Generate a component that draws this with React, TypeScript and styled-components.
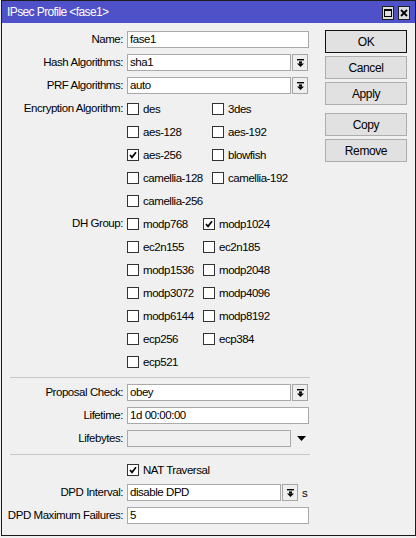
import React from "react";
import styled, { createGlobalStyle } from "styled-components";

const GlobalStyle = createGlobalStyle`
  html, body {
    margin: 0;
    padding: 0;
    background: #f0f0f0;
  }
  body {
    font-family: "Liberation Sans", Arial, sans-serif;
    font-size: 11.5px;
    color: #000;
  }
`;

const Window = styled.div`
  margin-left: 1px;
  width: 415px;
  height: 536px;
  box-sizing: border-box;
  border: 1px solid #1c1c1c;
  background: #f0f0f0;
  display: flex;
  flex-direction: column;
`;

const TitleBar = styled.div`
  height: 22px;
  flex: none;
  background: #4f51c9;
  display: flex;
  align-items: center;
  padding: 0 5px 0 5px;
`;

const Title = styled.div`
  color: #fff;
  font-size: 12px;
  letter-spacing: -0.6px;
`;

const TitleButtons = styled.div`
  margin-left: auto;
  margin-top: 2px;
  display: flex;
  gap: 4px;
`;

const TitleButton = styled.div`
  width: 12px;
  height: 14px;
  box-sizing: border-box;
  border: 1px solid #202020;
  background: #dedede;
  display: flex;
  align-items: center;
  justify-content: center;
`;

const Body = styled.div`
  display: flex;
  padding-top: 5px;
`;

const Form = styled.div`
  width: 307px;
  display: flex;
  flex-direction: column;
`;

const Row = styled.div`
  display: grid;
  grid-template-columns: 121px 182px;
  column-gap: 4px;
  align-items: start;
`;

const Label = styled.div`
  text-align: right;
  line-height: 23px;
  letter-spacing: -0.45px;
  white-space: nowrap;
`;

const Field = styled.div`
  min-height: 23px;
  display: flex;
  align-items: center;
`;

const Input = styled.div<{ $w?: number; $disabled?: boolean }>`
  width: ${(p) => p.$w ?? 182}px;
  height: 17px;
  box-sizing: border-box;
  border: 1px solid #a9a9a9;
  background: ${(p) => (p.$disabled ? "#f0f0f0" : "#fff")};
  padding: 0 2px;
  line-height: 15px;
  letter-spacing: -0.45px;
  white-space: nowrap;
  overflow: hidden;
`;

const DropButton = styled.div`
  width: 16px;
  height: 17px;
  margin-left: 1px;
  box-sizing: border-box;
  border: 1px solid #a6a6a6;
  background: #efefef;
  display: flex;
  align-items: center;
  justify-content: center;
`;

const Unit = styled.span`
  margin-left: 4px;
  letter-spacing: -0.45px;
`;

const ArrowOnly = styled.div`
  margin-left: 6px;
  display: flex;
  align-items: center;
`;

const CheckGrid = styled.div<{ $col: number }>`
  display: grid;
  grid-template-columns: ${(p) => p.$col}px 1fr;
  grid-auto-rows: 23px;
  align-items: center;
`;

const CheckItem = styled.label`
  display: flex;
  align-items: center;
  gap: 4px;
  letter-spacing: -0.45px;
  white-space: nowrap;
`;

const Box = styled.span`
  width: 12px;
  height: 12px;
  box-sizing: border-box;
  border: 1px solid #333;
  background: #fff;
  display: flex;
  align-items: center;
  justify-content: center;
`;

const Separator = styled.div`
  margin: 4px 0 3px 8px;
  width: 300px;
  border-top: 1px solid #c8c8c8;
`;

const Side = styled.div`
  margin-left: 16px;
  width: 82px;
  padding-top: 2px;
  display: flex;
  flex-direction: column;
  gap: 3px;
`;

const Button = styled.div<{ $primary?: boolean; $gapTop?: number }>`
  height: 23px;
  box-sizing: border-box;
  border: 1px solid ${(p) => (p.$primary ? "#111" : "#adadad")};
  background: #e1e1e1;
  margin-top: ${(p) => p.$gapTop ?? 0}px;
  display: flex;
  align-items: center;
  justify-content: center;
  font-size: 12px;
  letter-spacing: -0.4px;
`;

const DropGlyph = () => (
  <svg width="7" height="8" viewBox="0 0 7 8">
    <rect x="0" y="0" width="7" height="1.4" fill="#000" />
    <rect x="2" y="2.4" width="3" height="2.2" fill="#000" />
    <path d="M0 4.4h7L3.5 8z" fill="#000" />
  </svg>
);

const CheckGlyph = () => (
  <svg width="10" height="10" viewBox="0 0 10 10">
    <path d="M2 5l2 2.3L8 2.3" fill="none" stroke="#000" strokeWidth="1.7" />
  </svg>
);

const Check: React.FC<{ label: string; checked?: boolean }> = ({ label, checked }) => (
  <CheckItem>
    <Box>{checked && <CheckGlyph />}</Box>
    {label}
  </CheckItem>
);

const Combo: React.FC<{ value: string; w?: number }> = ({ value, w = 164 }) => (
  <>
    <Input $w={w}>{value}</Input>
    <DropButton>
      <DropGlyph />
    </DropButton>
  </>
);

const encryption: [string, boolean][] = [
  ["des", false],
  ["3des", false],
  ["aes-128", false],
  ["aes-192", false],
  ["aes-256", true],
  ["blowfish", false],
  ["camellia-128", false],
  ["camellia-192", false],
  ["camellia-256", false],
];

const dhGroups: [string, boolean][] = [
  ["modp768", false],
  ["modp1024", true],
  ["ec2n155", false],
  ["ec2n185", false],
  ["modp1536", false],
  ["modp2048", false],
  ["modp3072", false],
  ["modp4096", false],
  ["modp6144", false],
  ["modp8192", false],
  ["ecp256", false],
  ["ecp384", false],
  ["ecp521", false],
];

export default function App() {
  return (
    <>
      <GlobalStyle />
      <Window>
        <TitleBar>
          <Title>IPsec Profile &lt;fase1&gt;</Title>
          <TitleButtons>
            <TitleButton>
              <svg width="8" height="8" viewBox="0 0 8 8">
                <rect x="0.5" y="0.5" width="7" height="7" fill="none" stroke="#000" />
                <rect x="0" y="0" width="8" height="2" fill="#000" />
              </svg>
            </TitleButton>
            <TitleButton>
              <svg width="8" height="8" viewBox="0 0 8 8">
                <path d="M1 1l6 6M7 1L1 7" stroke="#000" strokeWidth="1.8" />
              </svg>
            </TitleButton>
          </TitleButtons>
        </TitleBar>
        <Body>
          <Form>
            <Row>
              <Label>Name:</Label>
              <Field>
                <Input>fase1</Input>
              </Field>
            </Row>
            <Row>
              <Label>Hash Algorithms:</Label>
              <Field>
                <Combo value="sha1" />
              </Field>
            </Row>
            <Row>
              <Label>PRF Algorithms:</Label>
              <Field>
                <Combo value="auto" />
              </Field>
            </Row>
            <Row>
              <Label>Encryption Algorithm:</Label>
              <CheckGrid $col={85}>
                {encryption.map(([name, on]) => (
                  <Check key={name} label={name} checked={on} />
                ))}
              </CheckGrid>
            </Row>
            <Row>
              <Label>DH Group:</Label>
              <CheckGrid $col={76}>
                {dhGroups.map(([name, on]) => (
                  <Check key={name} label={name} checked={on} />
                ))}
              </CheckGrid>
            </Row>
            <Separator />
            <Row>
              <Label>Proposal Check:</Label>
              <Field>
                <Combo value="obey" />
              </Field>
            </Row>
            <Row>
              <Label>Lifetime:</Label>
              <Field>
                <Input>1d 00:00:00</Input>
              </Field>
            </Row>
            <Row>
              <Label>Lifebytes:</Label>
              <Field>
                <Input $w={164} $disabled />
                <ArrowOnly>
                  <svg width="9" height="5" viewBox="0 0 9 5">
                    <path d="M0 0h9L4.5 5z" fill="#000" />
                  </svg>
                </ArrowOnly>
              </Field>
            </Row>
            <Separator />
            <Row>
              <Label />
              <Field>
                <Check label="NAT Traversal" checked />
              </Field>
            </Row>
            <Row>
              <Label>DPD Interval:</Label>
              <Field>
                <Combo value="disable DPD" w={154} />
                <Unit>s</Unit>
              </Field>
            </Row>
            <Row>
              <Label>DPD Maximum Failures:</Label>
              <Field>
                <Input>5</Input>
              </Field>
            </Row>
          </Form>
          <Side>
            <Button $primary>OK</Button>
            <Button>Cancel</Button>
            <Button>Apply</Button>
            <Button $gapTop={5}>Copy</Button>
            <Button>Remove</Button>
          </Side>
        </Body>
      </Window>
    </>
  );
}
